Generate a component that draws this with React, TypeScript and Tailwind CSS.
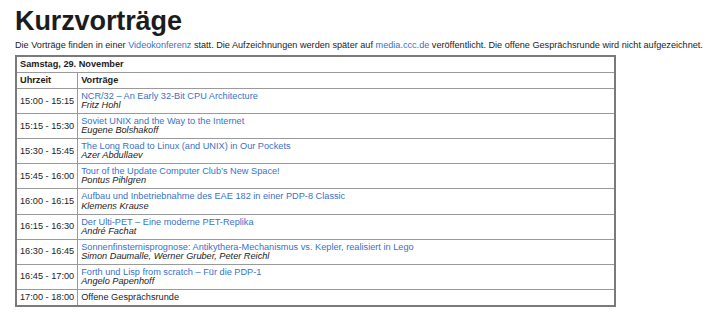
import React from 'react';

const talks = [
  { time: '15:00 - 15:15', title: 'NCR/32 – An Early 32-Bit CPU Architecture', speaker: 'Fritz Hohl' },
  { time: '15:15 - 15:30', title: 'Soviet UNIX and the Way to the Internet', speaker: 'Eugene Bolshakoff' },
  { time: '15:30 - 15:45', title: 'The Long Road to Linux (and UNIX) in Our Pockets', speaker: 'Azer Abdullaev' },
  { time: '15:45 - 16:00', title: 'Tour of the Update Computer Club’s New Space!', speaker: 'Pontus Pihlgren' },
  { time: '16:00 - 16:15', title: 'Aufbau und Inbetriebnahme des EAE 182 in einer PDP-8 Classic', speaker: 'Klemens Krause' },
  { time: '16:15 - 16:30', title: 'Der Ulti-PET – Eine moderne PET-Replika', speaker: 'André Fachat' },
  { time: '16:30 - 16:45', title: 'Sonnenfinsternisprognose: Antikythera-Mechanismus vs. Kepler, realisiert in Lego', speaker: 'Simon Daumalle, Werner Gruber, Peter Reichl' },
  { time: '16:45 - 17:00', title: 'Forth und Lisp from scratch – Für die PDP-1', speaker: 'Angelo Papenhoff' },
];

const cell = 'border border-[#9a9a9a] px-[3px] py-[3px] align-middle text-left';

export default function App() {
  return (
    <div className="bg-white min-h-[320px] px-[15px] pt-[8px] text-[#1c1c1c] font-['Liberation_Sans',Arial,sans-serif]">
      <h1 className="text-[27px] leading-[27px] font-bold tracking-[-0.1px]">Kurzvorträge</h1>
      <p className="mt-[5px] text-[9.15px] leading-[11px] whitespace-nowrap">
        Die Vorträge finden in einer <a href="#" className="text-[#3872c9]">Videokonferenz</a> statt. Die Aufzeichnungen werden später auf{' '}
        <a href="#" className="text-[#3872c9]">media.ccc.de</a> veröffentlicht. Die offene Gesprächsrunde wird nicht aufgezeichnet.
      </p>
      <table className="mt-[4px] w-[601px] border-collapse border-2 border-[#7a7a7a] text-[9.2px] leading-[9.05px]">
        <tbody>
          <tr>
            <th colSpan={2} className={cell + ' font-bold'}>Samstag, 29. November</th>
          </tr>
          <tr>
            <th className={cell + ' font-bold w-[54px]'}>Uhrzeit</th>
            <th className={cell + ' font-bold'}>Vorträge</th>
          </tr>
          {talks.map((t) => (
            <tr key={t.time}>
              <td className={cell + ' whitespace-nowrap'}>{t.time}</td>
              <td className={cell}>
                <a href="#" className="block text-[#3872c9]">{t.title}</a>
                <span className="block italic">{t.speaker}</span>
              </td>
            </tr>
          ))}
          <tr>
            <td className={cell + ' whitespace-nowrap'}>17:00 - 18:00</td>
            <td className={cell}>Offene Gesprächsrunde</td>
          </tr>
        </tbody>
      </table>
    </div>
  );
}
